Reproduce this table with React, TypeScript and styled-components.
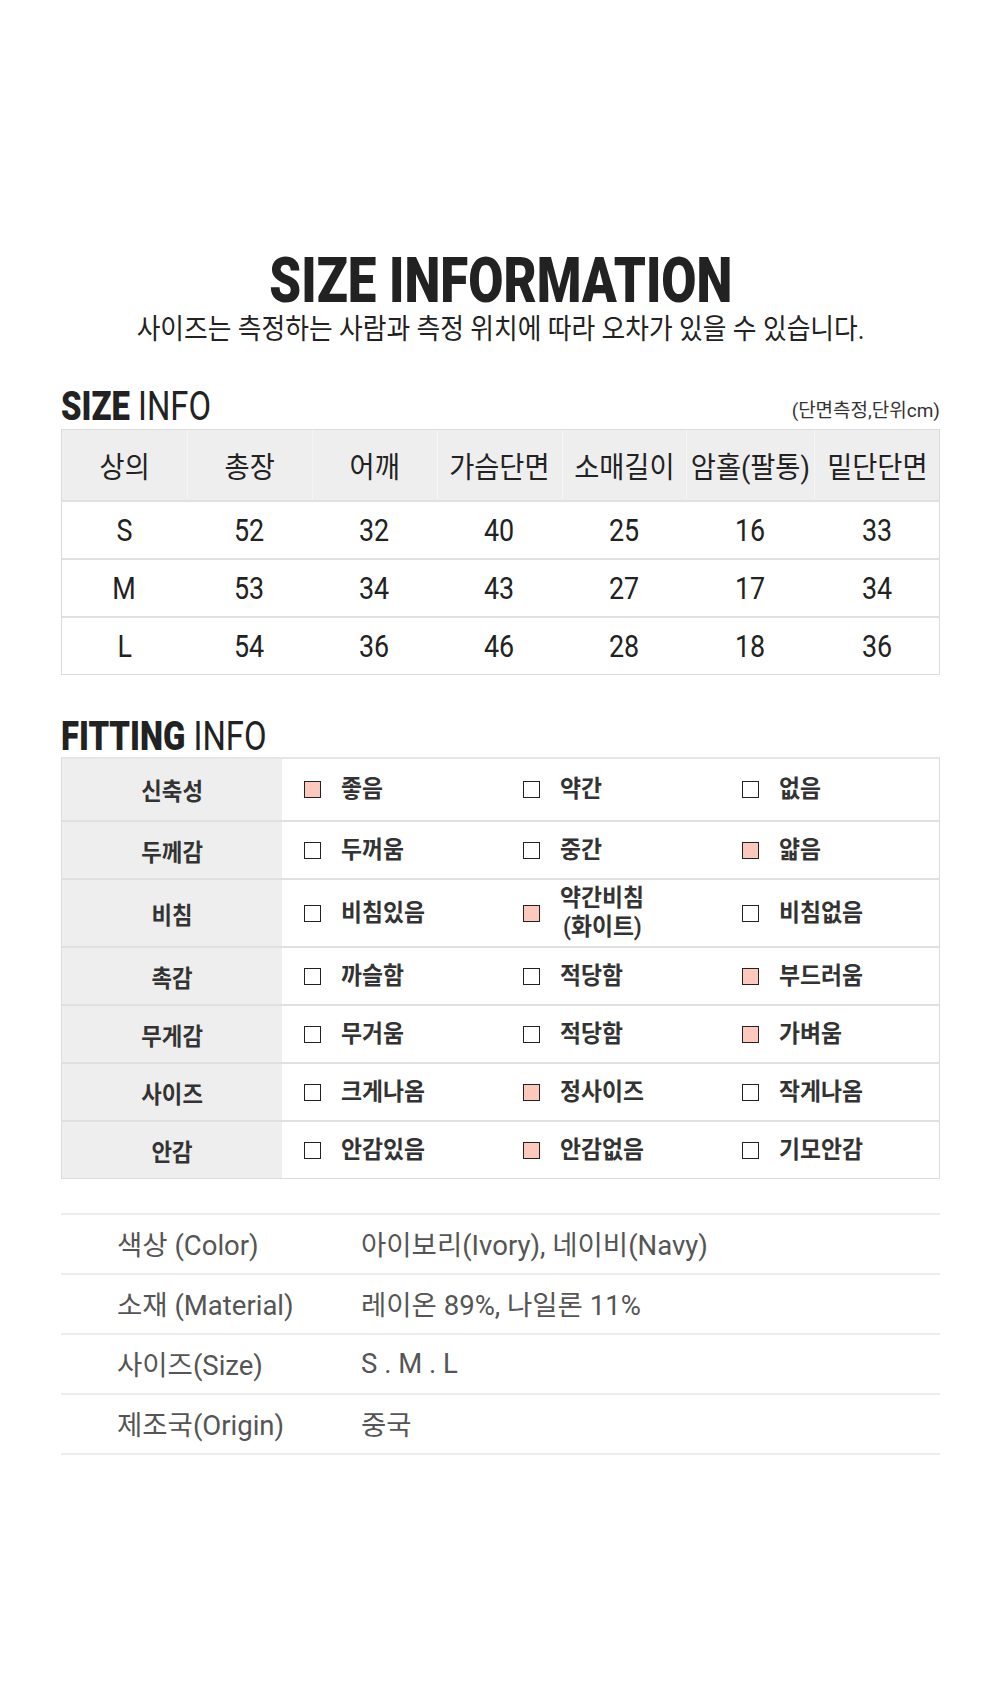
import React from 'react';
import styled, { createGlobalStyle } from 'styled-components';

const GlobalStyle = createGlobalStyle`
  body {
    margin: 0;
    background: #fff;
    font-family: Roboto, "Noto Sans CJK KR", sans-serif;
    color: #222;
  }
`;

const Page = styled.div`
  width: 1000px;
  box-sizing: border-box;
  padding: 249px 60px 220px 61px;
`;

const Squeeze = styled.span<{ $s?: number; $origin?: string }>`
  display: inline-block;
  white-space: nowrap;
  transform: scaleX(${(p) => p.$s ?? 0.85});
  transform-origin: ${(p) => p.$origin ?? 'center'};
`;

const Title = styled.h1`
  margin: 0;
  text-align: center;
  font-size: 63px;
  line-height: 63px;
  font-weight: 900;
  color: #222;
`;

const Subtitle = styled.p`
  margin: 0;
  text-align: center;
  font-size: 28px;
  line-height: 36px;
  color: #222;
`;

const SectionHead = styled.div<{ $top: number; $bottom: number }>`
  display: flex;
  justify-content: space-between;
  align-items: flex-end;
  margin-top: ${(p) => p.$top}px;
  margin-bottom: ${(p) => p.$bottom}px;
`;

const HeadTitle = styled.h2`
  margin: 0;
  font-size: 41px;
  line-height: 41px;
  font-weight: 400;
  color: #222;
  b {
    font-weight: 900;
  }
`;

const Note = styled.span`
  font-size: 19px;
  line-height: 24px;
  color: #333;
  margin-bottom: 4px;
`;

const SizeTable = styled.div`
  display: grid;
  grid-template-columns: repeat(7, 1fr);
  border: 1px solid #dcdcdc;
`;

const HeadCell = styled.div`
  height: 70px;
  background: #eeeeee;
  display: flex;
  align-items: center;
  justify-content: center;
  font-size: 29px;
  color: #222;
  border-left: 1px solid #f5f5f5;
  &:first-child {
    border-left: none;
  }
`;

const BodyCell = styled.div`
  height: 58px;
  box-sizing: border-box;
  border-top: 2px solid #e0e0e0;
  display: flex;
  align-items: center;
  justify-content: center;
  font-size: 32px;
  color: #222;
`;

const FitTable = styled.div`
  display: grid;
  grid-template-columns: 220px repeat(3, 1fr);
  grid-template-rows: 61px;
  grid-auto-rows: minmax(58px, auto);
  border: 1px solid #dcdcdc;
  border-top-width: 2px;
  border-top-color: #e6e6e6;
`;

const LabelCell = styled.div<{ $first: boolean }>`
  box-sizing: border-box;
  background: #eeeeee;
  border-top: ${(p) => (p.$first ? 'none' : '2px solid #e0e0e0')};
  display: flex;
  align-items: center;
  justify-content: center;
  font-size: 24px;
  font-weight: 600;
  color: #333;
`;

const OptionCell = styled.div<{ $first: boolean }>`
  box-sizing: border-box;
  border-top: ${(p) => (p.$first ? 'none' : '2px solid #e0e0e0')};
  display: flex;
  align-items: center;
  gap: 20px;
  padding: 4px 0 4px 22px;
`;

const Box = styled.span<{ $on: boolean }>`
  flex: none;
  width: 17px;
  height: 17px;
  box-sizing: border-box;
  border: 1.5px solid #222;
  background: ${(p) => (p.$on ? '#fcc9bc' : '#fff')};
`;

const OptionText = styled.div`
  font-size: 24px;
  line-height: 29px;
  font-weight: 600;
  color: #333;
  text-align: center;
`;

const SpecList = styled.div`
  margin-top: 34px;
  border-top: 2px solid #ececec;
`;

const SpecRow = styled.div`
  display: grid;
  grid-template-columns: 244px 1fr;
  align-items: center;
  height: 60px;
  box-sizing: border-box;
  padding-left: 56px;
  padding-bottom: 2px;
  border-bottom: 2px solid #ececec;
  font-size: 27.5px;
  color: #555;
`;

const sizeHead = ['상의', '총장', '어깨', '가슴단면', '소매길이', '암홀(팔통)', '밑단단면'];
const sizeRows = [
  ['S', '52', '32', '40', '25', '16', '33'],
  ['M', '53', '34', '43', '27', '17', '34'],
  ['L', '54', '36', '46', '28', '18', '36'],
];

type Option = { text: string[]; on?: boolean };
const fitRows: { label: string; options: Option[] }[] = [
  { label: '신축성', options: [{ text: ['좋음'], on: true }, { text: ['약간'] }, { text: ['없음'] }] },
  { label: '두께감', options: [{ text: ['두꺼움'] }, { text: ['중간'] }, { text: ['얇음'], on: true }] },
  {
    label: '비침',
    options: [{ text: ['비침있음'] }, { text: ['약간비침', '(화이트)'], on: true }, { text: ['비침없음'] }],
  },
  { label: '촉감', options: [{ text: ['까슬함'] }, { text: ['적당함'] }, { text: ['부드러움'], on: true }] },
  { label: '무게감', options: [{ text: ['무거움'] }, { text: ['적당함'] }, { text: ['가벼움'], on: true }] },
  { label: '사이즈', options: [{ text: ['크게나옴'] }, { text: ['정사이즈'], on: true }, { text: ['작게나옴'] }] },
  { label: '안감', options: [{ text: ['안감있음'] }, { text: ['안감없음'], on: true }, { text: ['기모안감'] }] },
];

const specs = [
  ['색상 (Color)', '아이보리(Ivory), 네이비(Navy)'],
  ['소재 (Material)', '레이온 89%, 나일론 11%'],
  ['사이즈(Size)', 'S . M . L'],
  ['제조국(Origin)', '중국'],
];

const App = (): React.ReactElement => {
  return (
    <Page>
      <GlobalStyle />
      <Title>
        <Squeeze $s={0.81}>SIZE INFORMATION</Squeeze>
      </Title>
      <Subtitle>
        <Squeeze $s={0.92}>사이즈는 측정하는 사람과 측정 위치에 따라 오차가 있을 수 있습니다.</Squeeze>
      </Subtitle>

      <SectionHead $top={38} $bottom={2}>
        <HeadTitle>
          <Squeeze $s={0.8} $origin='left'>
            <b>SIZE</b> INFO
          </Squeeze>
        </HeadTitle>
        <Note>(단면측정,단위cm)</Note>
      </SectionHead>
      <SizeTable>
        {sizeHead.map((h) => (
          <HeadCell key={h}>
            <Squeeze $s={0.94}>{h}</Squeeze>
          </HeadCell>
        ))}
        {sizeRows.map((row) =>
          row.map((v, i) => (
            <BodyCell key={row[0] + i}>
              <Squeeze $s={0.84}>{v}</Squeeze>
            </BodyCell>
          )),
        )}
      </SizeTable>

      <SectionHead $top={41} $bottom={0}>
        <HeadTitle>
          <Squeeze $s={0.8} $origin='left'>
            <b>FITTING</b> INFO
          </Squeeze>
        </HeadTitle>
      </SectionHead>
      <FitTable>
        {fitRows.map((row, r) => (
          <React.Fragment key={row.label}>
            <LabelCell $first={r === 0}>
              <Squeeze $s={0.93}>{row.label}</Squeeze>
            </LabelCell>
            {row.options.map((o) => (
              <OptionCell key={o.text[0]} $first={r === 0}>
                <Box $on={!!o.on} />
                <OptionText>
                  {o.text.map((t) => (
                    <div key={t}>
                      <Squeeze $s={0.95} $origin='left'>
                        {t}
                      </Squeeze>
                    </div>
                  ))}
                </OptionText>
              </OptionCell>
            ))}
          </React.Fragment>
        ))}
      </FitTable>

      <SpecList>
        {specs.map(([k, v]) => (
          <SpecRow key={k}>
            <span>{k}</span>
            <span>{v}</span>
          </SpecRow>
        ))}
      </SpecList>
    </Page>
  );
};

export default App;
